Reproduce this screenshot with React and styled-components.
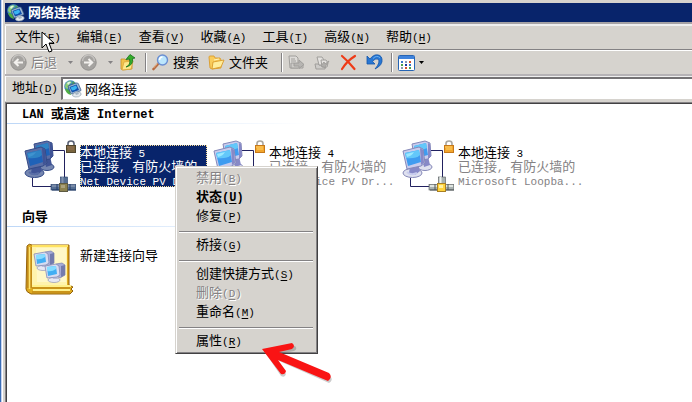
import React from "react";
import styled, { createGlobalStyle, css } from "styled-components";

const face = "#d6d3ce";
const navy = "#08246b";

const GlobalStyle = createGlobalStyle`
  * { box-sizing: border-box; }
  body {
    margin: 0;
    background: #fff;
    color: #000;
    font-family: "Noto Sans CJK SC", sans-serif;
    font-size: 13px;
    line-height: 14px;
    overflow: hidden;
  }
  button, input {
    font: inherit;
    color: inherit;
    border: 0;
    padding: 0;
    background: none;
    text-align: left;
    outline: none;
  }
  svg { display: block; flex: none; }
`;

/* ---------- text ---------- */

const Latin = styled.span`
  font-family: "Liberation Mono", monospace;
  font-size: ${(p) => (p.$bold ? 12 : 11)}px;
  white-space: pre;
`;

const Mnemonic = styled.span`
  text-decoration: underline;
  text-underline-offset: 2px;
`;

function Mixed({ children, bold }) {
  return children
    .split(/([\x20-\x7e]+)/)
    .filter(Boolean)
    .map((part, i) =>
      /^[\x20-\x7e]/.test(part) ? (
        <Latin key={i} $bold={bold}>
          {part}
        </Latin>
      ) : (
        part
      )
    );
}

function Label({ text, letter, bold }) {
  return (
    <span>
      {text}
      <Latin $bold={bold}>
        (<Mnemonic>{letter}</Mnemonic>)
      </Latin>
    </span>
  );
}

/* ---------- window chrome ---------- */

const Window = styled.div`
  position: relative;
  display: flex;
  flex-direction: column;
  min-height: 100vh;
  padding: 3px 0 0 5px;
  background: linear-gradient(90deg, #3a6db5 1px, #c6d3ef 1px 2px, #fff 2px 3px, ${face} 3px);
`;

const TitleBar = styled.header`
  display: flex;
  align-items: center;
  gap: 3px;
  height: 19px;
  padding-left: 2px;
  background: ${navy};
  color: #fff;
`;

const Title = styled.h1`
  margin: 0;
  padding-bottom: 2px;
  font-size: 13px;
  line-height: 17px;
  font-weight: 700;
`;

const MenuBar = styled.nav`
  display: flex;
  align-items: center;
  height: 29px;
  padding: 0 0 0 2px;
  border-top: 2px solid #a5a2a5;
  border-bottom: 1px solid #fff;
  box-shadow: inset 0 2px #efefef, inset 1px 0 #fff, inset 0 -1px #848284;
`;

const MenuButton = styled.button`
  padding: 0 8px;
  white-space: nowrap;
`;

const Toolbar = styled.div`
  display: flex;
  align-items: center;
  height: 25px;
  padding-left: 5px;
  border-bottom: 2px solid #b5b2b5;
  box-shadow: inset 1px 0 #fff;
`;

const ToolButton = styled.button`
  display: flex;
  align-items: center;
  gap: 4px;
  padding: 0 4px 0 0;
  white-space: nowrap;
  ${(p) => p.$wide && css`padding-right: 9px;`}
  &:disabled { color: #848284; text-shadow: 1px 1px #fff; }
`;

const ToolText = styled.span`
  padding-bottom: 2px;
`;

const Divider = styled.span`
  width: 2px;
  height: 19px;
  margin: 0 5px 0 4px;
  background: linear-gradient(90deg, #848284 1px, #fff 1px);
`;

const DropButton = styled.button`
  display: flex;
  align-items: center;
  justify-content: center;
  width: ${(p) => (p.$tight ? 5 : 19)}px;
  height: 19px;
`;

const AddressBar = styled.div`
  display: flex;
  align-items: center;
  height: 25px;
  padding-left: 7px;
  box-shadow: inset 1px 0 #fff, inset 0 1px #efefef;
`;

const AddressLabel = styled.label`
  width: 49px;
  padding-bottom: 2px;
  white-space: nowrap;
`;

const AddressField = styled.div`
  display: flex;
  flex: 1;
  align-items: center;
  gap: 3px;
  height: 23px;
  padding-left: 1px;
  background: #fff;
  border-top: 2px solid #737173;
  border-left: 2px solid #737173;
  border-bottom: 1px solid ${face};
`;

const AddressInput = styled.input`
  flex: 1;
  min-width: 0;
  height: 20px;
  padding-bottom: 2px;
`;

/* ---------- content ---------- */

const Content = styled.main`
  flex: 1;
  margin-top: 1px;
  background: #fff;
  border: 0 solid #848284;
  border-width: 1px 0 0 1px;
  box-shadow: inset 1px 1px #424142;
  padding: 2px 0 0 1px;
`;

const GroupTitle = styled.h2`
  margin: 0;
  height: 19px;
  padding-left: 15px;
  font-size: 13px;
  line-height: 16px;
  font-weight: 700;
  background: linear-gradient(90deg, #bdd7f7, #fff 300px) bottom / 100% 1px no-repeat;
`;

const Items = styled.div`
  display: grid;
  grid-template-columns: repeat(auto-fill, 189px);
  padding: 16px 0 16px 17px;
`;

const Item = styled.button`
  display: flex;
  align-items: flex-start;
  gap: 4px;
`;

const ItemText = styled.span`
  display: block;
  width: 127px;
  margin-top: 5px;
  white-space: nowrap;
  ${(p) =>
    p.$selected &&
    css`
      background: ${navy};
      color: #fff;
      outline: 1px dotted #f7db94;
      outline-offset: -1px;
    `}
`;

const Line = styled.span`
  display: block;
  height: 14px;
  color: ${(p) => (p.$soft ? "#848284" : "inherit")};
`;

/* ---------- overlays ---------- */

const ContextMenu = styled.div`
  position: absolute;
  left: 175px;
  top: 166px;
  width: 143px;
  padding: 3px 4px 1px 3px;
  background: ${face};
  border: 1px solid;
  border-color: ${face} #424142 #424142 ${face};
  box-shadow: inset 1px 1px #fff, inset -1px -1px #848284;
`;

const ContextItem = styled.button`
  display: block;
  width: 100%;
  height: 19px;
  padding: 0 0 3px 17px;
  font-weight: ${(p) => (p.$bold ? 700 : 400)};
  white-space: nowrap;
  &:disabled { color: #848284; text-shadow: 1px 1px #fff; }
`;

const Separator = styled.hr`
  height: 2px;
  margin: 4px 0;
  border: 0;
  background: linear-gradient(#848284 1px, #fff 1px);
`;

const Pointer = styled.svg`
  position: absolute;
  left: 41px;
  top: 31px;
  pointer-events: none;
`;

const RedArrow = styled.svg`
  position: absolute;
  left: 258px;
  top: 338px;
  pointer-events: none;
`;

/* ---------- icons ---------- */

function GlobeIcon() {
  return (
    <svg width="18" height="18" viewBox="0 0 18 18" aria-hidden="true">
      <circle cx="6.5" cy="6.5" r="6" fill="#3a87c4" stroke="#5b93b8" strokeWidth=".6" />
      <path d="M1 7Q1 2 6 1l2 1-3 3 1 2-3 2Z" fill="#8ccf74" />
      <path d="M3 3q2-2 4-1L4 5Z" fill="#dff5e4" />
      <path d="m9 1 3 3-1 2-3-2Z" fill="#4ea457" />
      <path d="M1 9q1 5 6 6l-1-4-3-2Z" fill="#4fae45" />
      <path d="m4 6 8-3q2-.500 2.500 1L17 10q0 1-1 1l-8 3q-1 0-1.500-1Z" fill="#9cb8d2" stroke="#2c4f80" strokeWidth=".7" />
      <path d="m5.500 7 7-2.500 2.500 5.500-7 2.500Z" fill="#0f4fae" />
      <path d="m6.500 7.500 5.500-2 1.200 2.500Q11 10.500 8 10.500Z" fill="#39b4f0" />
      <path d="M9 14q3-3 6-2 3 1 2 3-2 2.500-6 2-4-1-2-3Z" fill="#e3e9ee" stroke="#8798a8" strokeWidth=".6" />
      <path d="m11 13 3-1 1 2-3 1Z" fill="#a3b4c4" />
    </svg>
  );
}

function CircleArrow({ flip }) {
  return (
    <svg width="17" height="17" viewBox="0 0 17 17" aria-hidden="true">
      <circle cx="8.5" cy="8.5" r="7.7" fill="#a5a3a0" stroke="#92908e" />
      <path d="M2.5 7a6 6 0 0 1 12 0" fill="none" stroke="#c3c1be" strokeWidth="1.5" />
      <path
        d={flip ? "M4 8.5h8M8.5 5l3.7 3.5L8.5 12" : "M13 8.5H5M8.5 5 4.8 8.5 8.5 12"}
        fill="none"
        stroke="#f3f1ee"
        strokeWidth="2"
      />
    </svg>
  );
}

function Caret({ color = "#848284" }) {
  return (
    <svg width="5" height="3" viewBox="0 0 5 3" aria-hidden="true">
      <path d="M0 0h5L2.5 3Z" fill={color} />
    </svg>
  );
}

function FolderIcon({ up }) {
  return (
    <svg width="17" height="17" viewBox="0 0 17 17" aria-hidden="true">
      {up ? (
        <>
          <path d="M1 5h4l1 1h6v9l-9 1-2-1Z" fill="#f1c34b" stroke="#c8922a" strokeWidth=".8" />
          <path d="m4 8 9-1-2 8-9 1Z" fill="#ffe88a" stroke="#d6a136" strokeWidth=".7" />
          <path d="M6 13q5-2 3.500-8L6 5.500 10 .500 15 4l-2.500.500Q14 11 6 13Z" fill="#36ae2b" stroke="#14701a" strokeWidth=".8" />
        </>
      ) : (
        <>
          <path d="M1 3q0-1 1-1h4l1 2h5l1 2v8l-9 1-2-1Z" fill="#f9cc5b" stroke="#d99b2b" strokeWidth=".9" />
          <path d="m5 8 11-2-3 7-9 2Z" fill="#ffed9b" stroke="#d99b2b" strokeWidth=".9" />
          <path d="m6 6 5-1" stroke="#fff3bd" />
        </>
      )}
    </svg>
  );
}

function SearchIcon() {
  return (
    <svg width="17" height="17" viewBox="0 0 17 17" aria-hidden="true">
      <path d="m1.5 15 5-5.5" stroke="#b66b42" strokeWidth="2.6" strokeLinecap="round" />
      <path d="m1.5 14 4-4.500" stroke="#e9b58b" />
      <circle cx="10.500" cy="6" r="5" fill="#bce6fc" stroke="#6a8ed2" strokeWidth="1.4" />
      <path d="M7.500 6q0-3 3-3" fill="none" stroke="#fff" strokeWidth="1.5" />
    </svg>
  );
}

function MoveIcon({ copy }) {
  return (
    <svg width="17" height="17" viewBox="0 0 17 17" aria-hidden="true" fill="#cdcbc8" stroke="#a09e9b">
      {copy ? (
        <>
          <path d="M1 10h3l1 1h6v4H2Z" />
          <path d="M3 3h5l2 3v5H5Z" fill="#e4e2df" />
          <path d="M7 6h5l2 3-1 4H8Z" fill="#e4e2df" />
          <path d="m7 12 3-4 1 2 4-3-4 6 1 1Z" fill="#b0aeab" />
        </>
      ) : (
        <>
          <path d="M1 2h7l2 2v10H2Z" fill="#dddbd8" />
          <path d="M3 5h4M3 7h5" />
          <path d="M3 14V9h3l1 1h8v4Z" />
          <path d="M6 9h5V6l5 4.500-5 4V12H6Z" fill="#b7b5b2" />
        </>
      )}
    </svg>
  );
}

function DeleteIcon() {
  return (
    <svg width="17" height="17" viewBox="0 0 17 17" aria-hidden="true">
      <path d="M2 2q6 5 12.500 13M15 2Q7 7 2 15" fill="none" stroke="#ee3b17" strokeWidth="2.2" strokeLinecap="round" />
    </svg>
  );
}

function UndoIcon() {
  return (
    <svg width="17" height="17" viewBox="0 0 17 17" aria-hidden="true">
      <path d="M1 2v8h8L6.500 7.500Q9 4 12 5q3 3-3 10 8-4 7-10-1-5-7-4-3 1-5 4Z" fill="#2877d4" stroke="#1455a8" strokeWidth=".8" />
      <path d="M7 4.500q4-4 7-.500" fill="none" stroke="#67aef0" />
    </svg>
  );
}

function ViewsIcon() {
  return (
    <svg width="17" height="16" viewBox="0 0 17 16" aria-hidden="true">
      <rect x=".5" y=".5" width="16" height="15" rx="1" fill="#fff" stroke="#2765b4" />
      <path d="M1 2.500h15" stroke="#3f83dc" strokeWidth="3" />
      <path d="M3 6h2v2H3ZM11 9h2v2h-2Z" fill="#3975c9" />
      <path d="M7 6h2v2H7ZM3 12h2v2H3Z" fill="#8a9bb5" />
      <path d="M11 6h2v2h-2ZM7 12h2v2H7Z" fill="#d45132" />
      <path d="M3 9h2v2H3ZM11 12h2v2h-2Z" fill="#4ba34b" />
      <path d="M7 9h2v2H7Z" fill="#20399f" />
    </svg>
  );
}

const palettes = {
  normal: {
    frame: "#c8cced", edge: "#8588b8", side: "#8789c7", top: "#63c8fa", mid: "#3f9cf0",
    glow: "#9be8ff", base: "#dfe1ef", lock: "#f2a62d", lockLight: "#ffd36b", shackle: "#aaa7a0",
    pipe: "#a9b2b1", pipeLight: "#edf2ee", pipeDark: "#505659", box: "#ffd33d",
  },
  selected: {
    frame: "#5a6ea6", edge: "#334a87", side: "#405496", top: "#2f83c4", mid: "#1f62b8",
    glow: "#3f93cf", base: "#7586b0", lock: "#79653e", lockLight: "#9b765a", shackle: "#5b6377",
    pipe: "#566f93", pipeLight: "#8293ae", pipeDark: "#213a67", box: "#8c8250",
  },
};

function ConnectionIcon({ selected }) {
  const c = selected ? palettes.selected : palettes.normal;
  return (
    <svg width="52" height="52" viewBox="0 0 52 52" aria-hidden="true">
      <path d="M29 10.500h11.500V38M8.500 38v8.500H28" fill="none" stroke="#21215f" />
      <ellipse cx="23" cy="27" rx="7" ry="3.500" fill={c.base} stroke={c.edge} />
      <path d="m20 17 6-1 2 9-6 2Z" fill={c.side} />
      <path d="m10 4 13-3 5 2 1 13-3 3-13 2Z" fill={c.frame} stroke={c.edge} />
      <path d="m26 3 2 1 1 12-3 3Z" fill={c.side} />
      <path d="m12 6 12-3 2 12-12 3Z" fill={c.mid} />
      <path d="m12 6 12-3 1 5q-5 3-12 2Z" fill={c.top} />
      <ellipse cx="10.500" cy="33" rx="9.500" ry="4.500" fill={c.base} stroke={c.edge} />
      <path d="m8 26 8-2 2 7-5 4-6-2Z" fill={c.side} />
      <path d="M5 32q4 4 10 1" fill="none" stroke={c.frame} strokeWidth="2" />
      <path d="m1 11 16-4 4 2 2 14-4 3-14 3Z" fill={c.frame} stroke={c.edge} />
      <path d="m18 8 3 2 1 13-3 2Z" fill={c.side} />
      <path d="m3 13 14-3 2 12-13 4Z" fill={c.mid} />
      <path d="m3 13 14-3 1 5q-4 4-14 3Z" fill={c.top} />
      <path d="m4 14 8-2q-2 4-7 5Z" fill={c.glow} />
      <path d="M44 6V3.500Q44 1 47 1t3 2.500V6" fill="none" stroke={c.shackle} strokeWidth="1.6" />
      <rect x="42.500" y="5.500" width="9" height="7" fill={c.lock} stroke={selected ? "#51472f" : "#c67819"} />
      <path d="M43 7h7M44 9h6" stroke={c.lockLight} />
      <rect x="36.500" y="37" width="7" height="8" fill={c.pipe} stroke={c.pipeDark} strokeWidth=".6" />
      <path d="M38.500 37v8" stroke={c.pipeLight} strokeWidth="2" />
      <rect x="27" y="44.500" width="25" height="5.500" fill={c.pipe} stroke={c.pipeDark} strokeWidth=".6" />
      <path d="M28 46h23" stroke={c.pipeLight} strokeWidth="1.6" />
      <path d="M28 50h24M33 44v6M46 44v6" stroke={c.pipeDark} />
      <rect x="35.500" y="43.500" width="8" height="8" fill={c.box} stroke={selected ? "#5e5b43" : "#aa8022"} />
      <path d="M37 45h4v3h-4Z" fill={selected ? "#aaa27e" : "#fff1a2"} />
    </svg>
  );
}

function SmallPc({ x, y }) {
  return (
    <g transform={`translate(${x} ${y})`}>
      <path d="m11 1 6-1 3 2v10l-5 3-4-2Z" fill="#a6acd8" stroke="#787fad" strokeWidth=".7" />
      <path d="m16 3 4-1v10l-4 2Z" fill="#737bad" />
      <ellipse cx="9" cy="17" rx="6" ry="2.500" fill="#e6e8f4" stroke="#9296b8" strokeWidth=".7" />
      <path d="m7 13 5-1 1 4H8Z" fill="#b8bddb" />
      <path d="m0 3 11-2 3 2 1 9-3 2-10 1Z" fill="#d8dcf1" stroke="#868bb5" strokeWidth=".8" />
      <path d="m2 4 9-1 1 8-9 2Z" fill="#42aef3" />
      <path d="m2 4 9-1v3Q7 9 2 8Z" fill="#86dcff" />
    </g>
  );
}

function WizardIcon() {
  return (
    <svg width="52" height="52" viewBox="0 0 52 52" aria-hidden="true">
      <path d="M3 3q2-3 5-1h37v40l4 2-2 2 2 2-3 3H7q-5-2-5-5Z" fill="#e0ac20" stroke="#94630c" />
      <path d="M8 4h35v38H8Z" fill="#fff3ac" />
      <path d="M12 5h30v34H13Z" fill="#fffbd8" opacity=".6" />
      <path d="M8 3h36" stroke="#ffe260" strokeWidth="2" />
      <path d="M4 4v41M7 4v41" stroke="#a86c10" />
      <path d="M5.500 4v42" stroke="#ffe56f" strokeWidth="1.6" />
      <path d="M8 43h39M9 47h37" stroke="#fff08b" strokeWidth="2" />
      <path d="M8 45h38M8 49h38" stroke="#b47c14" />
      <path d="M44.500 3v39" stroke="#b98012" />
      <SmallPc x={10} y={8} />
      <SmallPc x={21} y={20} />
    </svg>
  );
}

/* ---------- data ---------- */

const menus = [
  ["文件", "F"], ["编辑", "E"], ["查看", "V"], ["收藏", "A"],
  ["工具", "T"], ["高级", "N"], ["帮助", "H"],
];

const connections = [
  { name: "本地连接 5", device: "Net Device PV Dr...", selected: true },
  { name: "本地连接 4", device: "Net Device PV Dr..." },
  { name: "本地连接 3", device: "Microsoft Loopba..." },
];

const actions = [
  { text: "禁用", letter: "B", disabled: true },
  { text: "状态", letter: "U", bold: true },
  { text: "修复", letter: "P" },
  null,
  { text: "桥接", letter: "G" },
  null,
  { text: "创建快捷方式", letter: "S" },
  { text: "删除", letter: "D", disabled: true },
  { text: "重命名", letter: "M" },
  null,
  { text: "属性", letter: "R" },
];

export default function App() {
  return (
    <>
      <GlobalStyle />
      <Window>
        <TitleBar>
          <GlobeIcon />
          <Title>网络连接</Title>
        </TitleBar>
        <MenuBar>
          {menus.map(([text, letter]) => (
            <MenuButton key={letter}>
              <Label text={text} letter={letter} />
            </MenuButton>
          ))}
        </MenuBar>
        <Toolbar>
          <ToolButton disabled><CircleArrow /><ToolText>后退</ToolText></ToolButton>
          <DropButton disabled aria-label="后退列表"><Caret /></DropButton>
          <ToolButton disabled aria-label="前进"><CircleArrow flip /></ToolButton>
          <DropButton disabled aria-label="前进列表"><Caret /></DropButton>
          <ToolButton aria-label="向上"><FolderIcon up /></ToolButton>
          <Divider />
          <ToolButton $wide><SearchIcon /><ToolText>搜索</ToolText></ToolButton>
          <ToolButton $wide><FolderIcon /><ToolText>文件夹</ToolText></ToolButton>
          <Divider />
          <ToolButton $wide disabled aria-label="移至"><MoveIcon /></ToolButton>
          <ToolButton $wide disabled aria-label="复制到"><MoveIcon copy /></ToolButton>
          <ToolButton $wide aria-label="删除"><DeleteIcon /></ToolButton>
          <ToolButton aria-label="撤销"><UndoIcon /></ToolButton>
          <Divider />
          <ToolButton aria-label="查看方式"><ViewsIcon /></ToolButton>
          <DropButton $tight aria-label="查看方式列表"><Caret color="#000" /></DropButton>
        </Toolbar>
        <AddressBar>
          <AddressLabel htmlFor="address">
            <Label text="地址" letter="D" />
          </AddressLabel>
          <AddressField>
            <GlobeIcon />
            <AddressInput id="address" defaultValue="网络连接" />
          </AddressField>
        </AddressBar>
        <Content>
          <GroupTitle><Mixed bold>LAN 或高速 Internet</Mixed></GroupTitle>
          <Items>
            {connections.map((c) => (
              <Item key={c.name}>
                <ConnectionIcon selected={c.selected} />
                <ItemText $selected={c.selected}>
                  <Line><Mixed>{c.name}</Mixed></Line>
                  <Line $soft={!c.selected}><Mixed>已连接, 有防火墙的</Mixed></Line>
                  <Line $soft={!c.selected}><Mixed>{c.device}</Mixed></Line>
                </ItemText>
              </Item>
            ))}
          </Items>
          <GroupTitle>向导</GroupTitle>
          <Items>
            <Item>
              <WizardIcon />
              <ItemText><Line>新建连接向导</Line></ItemText>
            </Item>
          </Items>
        </Content>
        <ContextMenu role="menu">
          {actions.map((a, i) =>
            a ? (
              <ContextItem key={i} role="menuitem" disabled={a.disabled} $bold={a.bold}>
                <Label text={a.text} letter={a.letter} bold={a.bold} />
              </ContextItem>
            ) : (
              <Separator key={i} />
            )
          )}
        </ContextMenu>
        <Pointer width="14" height="23" viewBox="0 0 14 23" aria-hidden="true">
          <path d="M1 1v16l4-4 3 8 3-1-3-8h5Z" fill="#fff" stroke="#000" />
        </Pointer>
        <RedArrow width="78" height="48" viewBox="0 0 78 48" aria-hidden="true">
          <path d="M5 11 36 6q3 3-1 5l-15 3 51 22q4 4-1 7L18 20l9 14q-1 4-5 2Z" fill="#555" opacity=".3" transform="translate(1 2)" />
          <path d="M4 11 34 5q4 3 0 6l-13 3 50 21q4 4-1 8L20 22l8 11q-1 4-5 3Z" fill="#f91414" />
        </RedArrow>
      </Window>
    </>
  );
}
